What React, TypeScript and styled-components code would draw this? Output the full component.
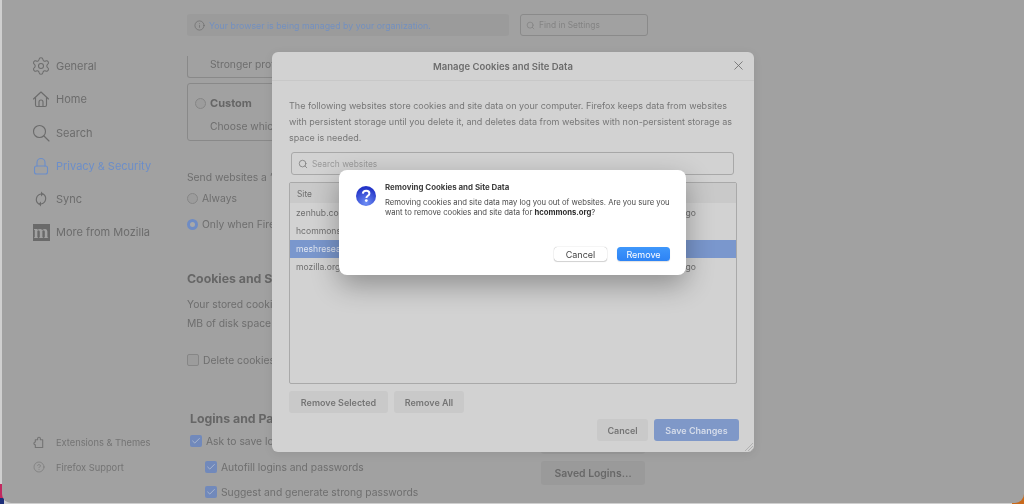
import React from "react";
import styled, { createGlobalStyle } from "styled-components";
import { Settings, Search, CircleHelp, Info, X, Check } from "lucide-react";

const Global = createGlobalStyle`
  html, body { margin: 0; padding: 0; width: 1024px; height: 504px; overflow: hidden; }
  body {
    font-family: Inter, "Liberation Sans", sans-serif;
    background: #cfcfcf;
  }
  * { box-sizing: border-box; }
`;

const Screen = styled.div`
  position: relative;
  width: 1024px;
  height: 504px;
  overflow: hidden;
  filter: blur(0.45px);
  background:
    linear-gradient(0deg, #1d2f7a 0 6px, transparent 6px) 0 100% / 4px 100% no-repeat,
    linear-gradient(0deg, #c2285f 0 20px, transparent 20px) 0 100% / 4px 100% no-repeat,
    linear-gradient(0deg, #c96a1c 0 12px, transparent 12px) 100% 100% / 12px 100% no-repeat,
    #cfcfcf;
`;

const Win = styled.div`
  width: 1022px;
  height: 503px;
  margin-left: 2px;
  background: #a1a1a1;
  border-radius: 0 0 9px 9px;
  display: grid;
  grid-template-columns: 185px 1fr;
  overflow: hidden;
`;

const Side = styled.nav`
  display: flex;
  flex-direction: column;
  justify-content: space-between;
  padding: 55px 0 27px 30px;
  height: 503px;
`;

const NavList = styled.div`
  display: flex;
  flex-direction: column;
  gap: 11.3px;
`;

const NavItem = styled.div<{ $active?: boolean }>`
  display: flex;
  align-items: center;
  gap: 6px;
  height: 22px;
  font-size: 11px;
  color: ${(p) => (p.$active ? "#6c8ec9" : "#6c6c6c")};
  svg { width: 18px; height: 18px; flex: none; }
  svg.lucide { width: 20px; height: 20px; margin: 0 -1px; stroke-width: 1.25; }
`;

const NavGlyph = styled.svg`
  fill: none;
  stroke: currentColor;
  stroke-width: 1.15;
  stroke-linecap: round;
  stroke-linejoin: round;
`;

const MozLogo = styled.span`
  width: 17px;
  height: 17px;
  margin-left: 0.5px;
  margin-right: 0.5px;
  background: #6a6a6a;
  color: #a1a1a1;
  font: 700 18px/14px "Liberation Serif", serif;
  display: flex;
  align-items: center;
  justify-content: center;
  overflow: hidden;
  flex: none;
`;

const FootList = styled.div`
  display: flex;
  flex-direction: column;
  gap: 7px;
  padding-left: 1px;
`;

const FootItem = styled.div`
  display: flex;
  align-items: center;
  gap: 11px;
  height: 18px;
  font-size: 9.3px;
  color: #747474;
  svg { width: 12px; height: 12px; stroke-width: 1.2; flex: none; }
`;

const Main = styled.main`
  display: flex;
  flex-direction: column;
  height: 503px;
  overflow: hidden;
  padding-top: 14px;
`;

const TopRow = styled.div`
  display: flex;
  gap: 11px;
  height: 22px;
  flex: none;
`;

const Banner = styled.div`
  width: 322px;
  background: #9b9b9b;
  border-radius: 3px;
  display: flex;
  align-items: center;
  gap: 4px;
  padding-left: 7px;
  font-size: 8.8px;
  color: #7390c0;
  svg { width: 11px; height: 11px; color: #666; stroke-width: 1.3; }
`;

const FindBox = styled.div`
  width: 128px;
  border: 1px solid #8a8a8a;
  border-radius: 3px;
  display: flex;
  align-items: center;
  gap: 4px;
  padding-left: 5px;
  font-size: 8.4px;
  color: #838383;
  svg { width: 9px; height: 9px; }
`;

const Pane = styled.div`
  flex: 1;
  display: flex;
  flex-direction: column;
  color: #6e6e6e;
  font-size: 10.3px;
  white-space: nowrap;
`;

const OpenBox = styled.div`
  width: 300px;
  height: 22px;
  margin-top: 20px;
  margin-bottom: 5px;
  border: 1px solid #898989;
  border-top: 0;
  border-radius: 0 0 3px 3px;
  padding: 1px 0 0 22px;
  line-height: 14px;
`;

const OptionBox = styled.div`
  width: 300px;
  height: 58px;
  border: 1px solid #898989;
  border-radius: 3px;
  padding: 12px 7px;
`;

const Row = styled.div<{ $indent?: number; $top?: number }>`
  display: flex;
  align-items: center;
  gap: 4px;
  height: 14px;
  margin-left: ${(p) => p.$indent ?? 0}px;
  margin-top: ${(p) => p.$top ?? 0}px;
`;

const Radio = styled.span<{ $on?: boolean }>`
  width: 11px;
  height: 11px;
  border-radius: 50%;
  flex: none;
  border: ${(p) => (p.$on ? "3px solid #6f8cc4" : "1px solid #868686")};
  background: ${(p) => (p.$on ? "#a9a9a9" : "#9c9c9c")};
`;

const Box = styled.span<{ $on?: boolean }>`
  width: 12px;
  height: 12px;
  border-radius: 2px;
  flex: none;
  display: flex;
  align-items: center;
  justify-content: center;
  background: ${(p) => (p.$on ? "#7189bb" : "#9c9c9c")};
  border: ${(p) => (p.$on ? "none" : "1px solid #868686")};
  color: #b5bfd2;
  svg { width: 10px; height: 10px; stroke-width: 2; }
`;

const Bold = styled.span`
  font-weight: 700;
  font-size: 11px;
  color: #666;
`;

const Heading = styled.div<{ $top: number; $indent?: number }>`
  font-weight: 700;
  font-size: 12.3px;
  color: #666;
  height: 14px;
  line-height: 14px;
  margin-top: ${(p) => p.$top}px;
  margin-left: ${(p) => p.$indent ?? 0}px;
`;

const Line = styled.div<{ $top?: number; $indent?: number }>`
  height: 14px;
  line-height: 14px;
  margin-top: ${(p) => p.$top ?? 0}px;
  margin-left: ${(p) => p.$indent ?? 0}px;
`;

const LoginsGrid = styled.section`
  display: grid;
  grid-template-columns: 354px 104px;
  margin-top: 45px;
`;

const LoginsCol = styled.div`
  display: flex;
  flex-direction: column;
`;

const SideBtns = styled.div`
  display: flex;
  flex-direction: column;
  gap: 7px;
  padding-top: 18px;
`;

const PageBtn = styled.div`
  height: 24px;
  background: #9a9a9a;
  border-radius: 3px;
  font-size: 10.4px;
  font-weight: 600;
  color: #686868;
  display: flex;
  align-items: center;
  justify-content: center;
`;

const Modal = styled.div`
  position: absolute;
  left: 272px;
  top: 52px;
  width: 482px;
  height: 400px;
  background: #d2d2d2;
  border-radius: 6px;
  box-shadow: 0 2px 10px rgba(0, 0, 0, 0.08);
  display: flex;
  flex-direction: column;
  color: #747474;
  font-size: 9.2px;
`;

const ModalHead = styled.header`
  position: relative;
  height: 29px;
  flex: none;
  border-bottom: 1px solid #c8c8c8;
  padding-right: 20px;
  display: flex;
  align-items: center;
  justify-content: center;
  font-size: 9.5px;
  font-weight: 600;
  color: #6c6c6c;
  svg {
    position: absolute;
    right: 8px;
    top: 6px;
    width: 15px;
    height: 15px;
    stroke-width: 1.3;
    color: #6a6a6a;
  }
`;

const ModalBody = styled.div`
  flex: 1;
  display: flex;
  flex-direction: column;
  padding: 17px 17px 10px;
`;

const Para = styled.p`
  margin: 0;
  font-size: 9px;
  line-height: 16px;
  white-space: nowrap;
  color: #777;
`;

const SiteSearch = styled.div`
  margin: 6px 3px 0 2px;
  height: 23px;
  flex: none;
  border: 1px solid #a8a8a8;
  border-radius: 3px;
  display: flex;
  align-items: center;
  gap: 4px;
  padding-left: 6px;
  font-size: 8.4px;
  color: #9a9a9a;
  svg { width: 10px; height: 10px; color: #808080; }
`;

const Table = styled.div`
  margin-top: 7px;
  height: 202px;
  flex: none;
  border: 1px solid #a9a9a9;
  border-radius: 2px;
  display: flex;
  flex-direction: column;
  overflow: hidden;
`;

const THead = styled.div`
  height: 21px;
  flex: none;
  padding-left: 7px;
  background: linear-gradient(#c9c9c9 0 20px, transparent 20px);
  display: flex;
  align-items: center;
  font-size: 8.4px;
  color: #6e6e6e;
`;

const TRow = styled.div<{ $sel?: boolean }>`
  height: 18px;
  flex: none;
  padding: 0 40px 0 6px;
  display: flex;
  align-items: center;
  justify-content: space-between;
  background: ${(p) => (p.$sel ? "#7a97cd" : "transparent")};
  color: ${(p) => (p.$sel ? "#dfe5f0" : "#6f6f6f")};
  font-size: 8.6px;
`;

const Actions = styled.div`
  display: flex;
  gap: 6px;
  margin-top: 7px;
`;

const GrayBtn = styled.div<{ $w: number }>`
  width: ${(p) => p.$w}px;
  height: 22px;
  background: #c9c9c9;
  border-radius: 3px;
  display: flex;
  align-items: center;
  justify-content: center;
  font-size: 9px;
  font-weight: 600;
  color: #757575;
`;

const FootBtns = styled.div`
  display: flex;
  justify-content: flex-end;
  gap: 6px;
  margin: 6px -2px 0 0;
`;

const SaveBtn = styled(GrayBtn)`
  background: #7f98c8;
  color: #d5dcea;
`;

const Grip = styled.svg`
  position: absolute;
  right: 1px;
  bottom: 1px;
  width: 9px;
  height: 9px;
`;

const Alert = styled.div`
  position: absolute;
  left: 339px;
  top: 170px;
  width: 347px;
  height: 105px;
  background: #ffffff;
  border-radius: 8px;
  box-shadow: 0 10px 28px rgba(0, 0, 0, 0.32);
  padding: 12px 16px 14px 17px;
  display: grid;
  grid-template-columns: 20px minmax(0, 1fr);
  column-gap: 9px;
`;

const AlertIcon = styled.svg`
  width: 20px;
  height: 20px;
  margin-top: 4px;
`;

const AlertBody = styled.div`
  display: flex;
  flex-direction: column;
  color: #4a4a4a;
`;

const AlertTitle = styled.div`
  font-size: 7.9px;
  font-weight: 700;
  line-height: 10px;
  color: #3f3f3f;
`;

const AlertText = styled.div`
  margin-top: 6px;
  font-size: 7.68px;
  line-height: 10px;
  white-space: nowrap;
  b { font-weight: 700; color: #2e2e2e; }
`;

const AlertBtns = styled.div`
  margin-top: auto;
  display: flex;
  justify-content: flex-end;
  gap: 10px;
`;

const MacBtn = styled.div<{ $primary?: boolean }>`
  width: 53px;
  height: 14px;
  border-radius: 3.5px;
  display: flex;
  align-items: center;
  justify-content: center;
  font-size: 9px;
  color: ${(p) => (p.$primary ? "#ffffff" : "#444444")};
  background: ${(p) => (p.$primary ? "linear-gradient(#3f97fb, #2d83f5)" : "#ffffff")};
  box-shadow: ${(p) =>
    p.$primary ? "0 1px 1px rgba(0,0,0,.12)" : "0 0 1px rgba(0,0,0,.4), 0 1px 1px rgba(0,0,0,.15)"};
`;

const HomeIcon = () => (
  <NavGlyph viewBox="0 0 18 18">
    <path d="M1.5 9 9 2l7.5 7" />
    <path d="M3.5 7.5V15A1.5 1.5 0 0 0 5 16.5h8a1.5 1.5 0 0 0 1.5-1.5V7.5" />
    <path d="M7 16.5V12a2 2 0 0 1 4 0v4.5" />
  </NavGlyph>
);

const SearchIcon = () => (
  <NavGlyph viewBox="0 0 18 18">
    <circle cx="7.5" cy="7.5" r="6" />
    <path d="M12 12l5 5" />
  </NavGlyph>
);

const LockIcon = () => (
  <NavGlyph viewBox="0 0 18 18">
    <rect x="2.5" y="9" width="13" height="8" rx="2" />
    <path d="M5 9V5.5a4 4 0 0 1 8 0V9" />
  </NavGlyph>
);

const SyncIcon = () => (
  <NavGlyph viewBox="0 0 18 18">
    <path d="M9 4A5.5 5.5 0 0 0 6.5 13.8" />
    <path d="M9 14A5.5 5.5 0 0 0 11.5 4.2" />
    <path d="M9 1.5v5L11.5 4z" fill="currentColor" stroke="none" />
    <path d="M9 11.5v5L6.5 14z" fill="currentColor" stroke="none" />
  </NavGlyph>
);

const PuzzleIcon = () => (
  <NavGlyph viewBox="1 0 12 13">
    <path d="M3 12.5V9.5a1.4 1.4 0 0 1 0-3V4h2.5V2.8a1.5 1.5 0 0 1 3 0V4H11v8.5z" />
  </NavGlyph>
);

export default function App() {
  return (
    <Screen>
      <Global />
      <Win>
        <Side>
          <NavList>
            <NavItem><Settings />General</NavItem>
            <NavItem><HomeIcon />Home</NavItem>
            <NavItem><SearchIcon />Search</NavItem>
            <NavItem $active><LockIcon />Privacy &amp; Security</NavItem>
            <NavItem><SyncIcon />Sync</NavItem>
            <NavItem><MozLogo>m</MozLogo>More from Mozilla</NavItem>
          </NavList>
          <FootList>
            <FootItem><PuzzleIcon />Extensions &amp; Themes</FootItem>
            <FootItem><CircleHelp />Firefox Support</FootItem>
          </FootList>
        </Side>
        <Main>
          <TopRow>
            <Banner><Info />Your browser is being managed by your organization.</Banner>
            <FindBox><Search />Find in Settings</FindBox>
          </TopRow>
          <Pane>
            <OpenBox>Stronger protection</OpenBox>
            <OptionBox>
              <Row><Radio /><Bold>Custom</Bold></Row>
              <Line $top={9} $indent={15}>Choose which trackers</Line>
            </OptionBox>
            <Line $top={29}>Send websites a “Do Not Track” signal</Line>
            <Row $top={7}><Radio />Always</Row>
            <Row $top={12}><Radio $on />Only when Firefox is set</Row>
            <Heading $top={41}>Cookies and Site Data</Heading>
            <Line $top={11}>Your stored cookies</Line>
            <Line $top={5}>MB of disk space</Line>
            <Row $top={23}><Box />Delete cookies</Row>
            <LoginsGrid>
              <LoginsCol>
                <Heading $top={0} $indent={3}>Logins and Passwords</Heading>
                <Row $top={8} $indent={3}><Box $on><Check /></Box>Ask to save logins</Row>
                <Row $top={12} $indent={18}><Box $on><Check /></Box>Autofill logins and passwords</Row>
                <Row $top={11} $indent={18}><Box $on><Check /></Box>Suggest and generate strong passwords</Row>
              </LoginsCol>
              <SideBtns>
                <PageBtn>Exceptions…</PageBtn>
                <PageBtn>Saved Logins…</PageBtn>
              </SideBtns>
            </LoginsGrid>
          </Pane>
        </Main>
      </Win>
      <Modal>
        <ModalHead>Manage Cookies and Site Data<X /></ModalHead>
        <ModalBody>
          <Para>
            The following websites store cookies and site data on your computer. Firefox keeps data from websites<br />
            with persistent storage until you delete it, and deletes data from websites with non-persistent storage as<br />
            space is needed.
          </Para>
          <SiteSearch><Search />Search websites</SiteSearch>
          <Table>
            <THead>Site</THead>
            <TRow>zenhub.com<span>3 days ago</span></TRow>
            <TRow>hcommons.org</TRow>
            <TRow $sel>meshresearch.net</TRow>
            <TRow>mozilla.org<span>3 days ago</span></TRow>
          </Table>
          <Actions>
            <GrayBtn $w={99}>Remove Selected</GrayBtn>
            <GrayBtn $w={70}>Remove All</GrayBtn>
          </Actions>
          <FootBtns>
            <GrayBtn $w={51}>Cancel</GrayBtn>
            <SaveBtn $w={85}>Save Changes</SaveBtn>
          </FootBtns>
        </ModalBody>
        <Grip viewBox="0 0 9 9">
          <path d="M1 9 9 1M4 9 9 4M7 9 9 7" stroke="#a8a8a8" strokeWidth="0.8" />
        </Grip>
      </Modal>
      <Alert>
        <AlertIcon viewBox="0 0 20 20">
          <defs>
            <radialGradient id="qg" cx="50%" cy="85%" r="75%">
              <stop offset="0" stopColor="#6f8ff5" />
              <stop offset="1" stopColor="#2334c8" />
            </radialGradient>
          </defs>
          <circle cx="10" cy="10" r="10" fill="url(#qg)" />
          <path d="M6.8 7.6C7 5.6 8.4 4.7 10.2 4.7c1.9 0 3.2 1.1 3.2 2.7 0 2.4-3 2.4-3 4.6" fill="none" stroke="#fff" strokeWidth="2" />
          <circle cx="10.3" cy="14.6" r="1.4" fill="#fff" />
        </AlertIcon>
        <AlertBody>
          <AlertTitle>Removing Cookies and Site Data</AlertTitle>
          <AlertText>
            Removing cookies and site data may log you out of websites. Are you sure you<br />
            want to remove cookies and site data for <b>hcommons.org</b>?
          </AlertText>
          <AlertBtns>
            <MacBtn>Cancel</MacBtn>
            <MacBtn $primary>Remove</MacBtn>
          </AlertBtns>
        </AlertBody>
      </Alert>
    </Screen>
  );
}
